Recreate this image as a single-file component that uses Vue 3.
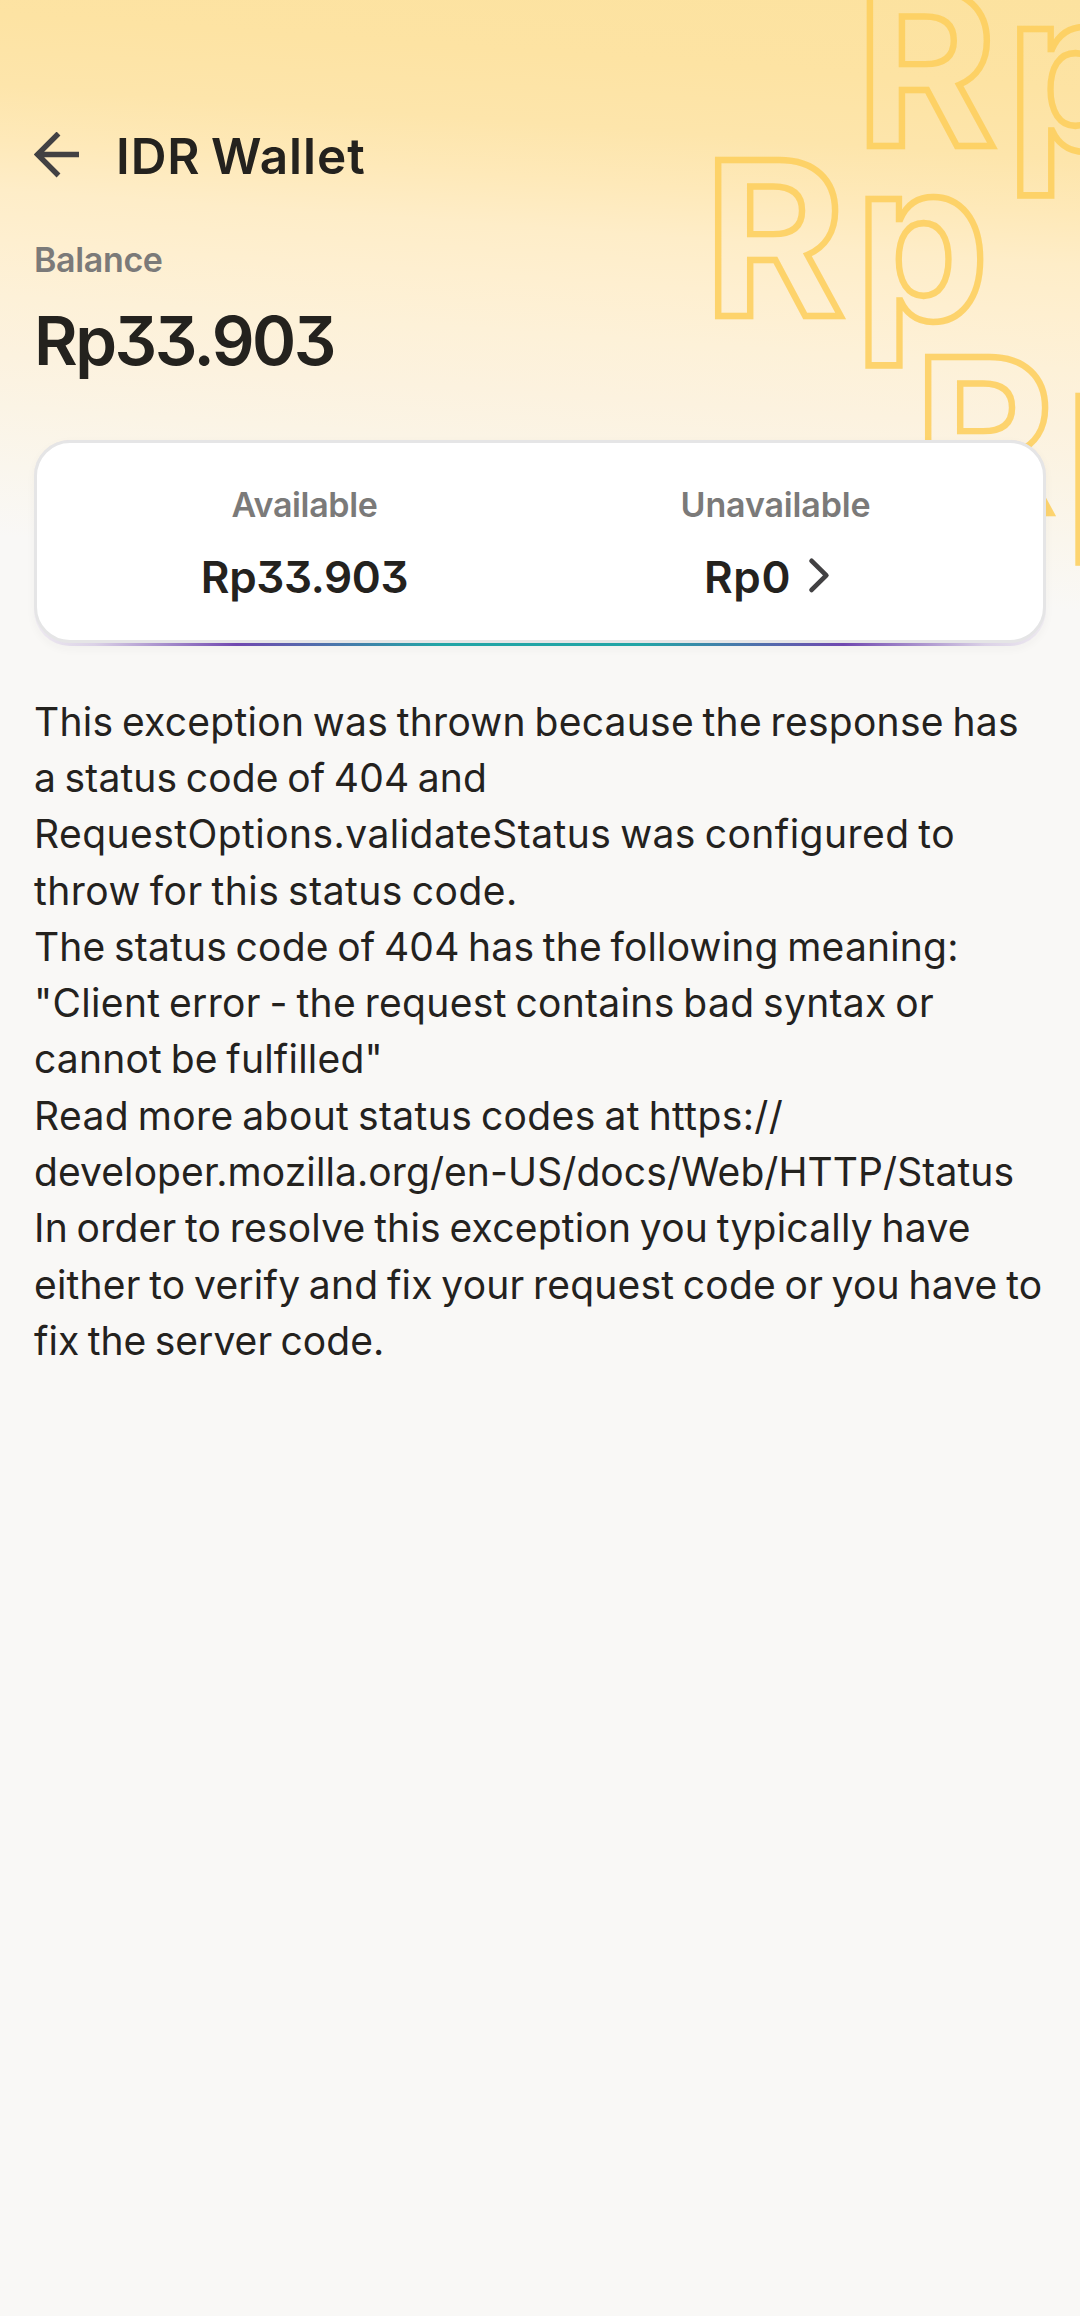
<script setup>
const message = [
  { text: 'This exception was thrown because the response has', tracking: -0.1 },
  { text: 'a status code of 404 and', tracking: -0.418 },
  { text: 'RequestOptions.validateStatus was configured to', tracking: 0.285 },
  { text: 'throw for this status code.', tracking: 0.09 },
  { text: 'The status code of 404 has the following meaning:', tracking: -0.245 },
  { text: '"Client error - the request contains bad syntax or', tracking: -0.1 },
  { text: 'cannot be fulfilled"', tracking: -0.062 },
  { text: 'Read more about status codes at https://', tracking: -0.015 },
  { text: 'developer.mozilla.org/en-US/docs/Web/HTTP/Status', tracking: 0.09 },
  { text: 'In order to resolve this exception you typically have', tracking: -0.18 },
  { text: 'either to verify and fix your request code or you have to', tracking: -0.3 },
  { text: 'fix the server code.', tracking: -0.38 },
]

// Word gaps are tightened; the saved width goes back between the letters.
const wordTrim = 2.6
const lineStyle = ({ text, tracking }) => {
  const spaces = text.split(' ').length - 1
  const spacing = tracking + (wordTrim * spaces) / (text.length - 1)
  return { letterSpacing: spacing.toFixed(3) + 'px' }
}

const marks = [
  { x: 855.7, y: 146 },
  { x: 704, y: 315.7 },
  { x: 914, y: 513.2 },
]
</script>

<template>
  <main class="page">
    <svg class="pattern" viewBox="0 0 1080 640" aria-hidden="true">
      <g v-for="m in marks" :key="m.y">
        <text :transform="`translate(${m.x} ${m.y})`">R</text>
        <text :transform="`translate(${m.x + 151.3} ${m.y + 4.2}) scale(0.985 1.035)`">p</text>
      </g>
    </svg>

    <header class="bar">
      <svg class="back" viewBox="0 0 46 46" aria-label="Back">
        <path d="M45 22.5H4M24.5 1.5L3.5 22.5L24.5 43.5" />
      </svg>
      <h1>IDR Wallet</h1>
    </header>

    <section class="balance">
      <p class="label">Balance</p>
      <p class="amount">Rp33.903</p>
    </section>

    <section class="card-edge">
      <div class="card">
        <div class="cell">
          <p class="label">Available</p>
          <p class="value">Rp33.903</p>
        </div>
        <div class="cell">
          <p class="label wide">Unavailable</p>
          <p class="value zero">
            <span>Rp0</span>
            <svg class="chevron" viewBox="0 0 50 50" aria-hidden="true">
              <path d="M14.6 8.9L29.3 23.4L14.6 37.9" />
            </svg>
          </p>
        </div>
      </div>
    </section>

    <section class="message">
      <span
        v-for="line in message"
        :key="line.text"
        class="line"
        :style="lineStyle(line)"
      >{{ line.text }}</span>
    </section>
  </main>
</template>

<style scoped>
.page {
  position: relative;
  box-sizing: border-box;
  width: 1080px;
  min-height: 2316px;
  padding: 126px 34px 0;
  overflow: hidden;
  font-family: Inter, 'Liberation Sans', sans-serif;
  font-feature-settings: 'cv09';
  color: #24221e;
  background:
    linear-gradient(184deg,
      #fce29f 0, #fde3a3 90px, #fde5ab 160px, #fee9b9 215px, #feedc8 265px,
      #feefd0 315px, #fdf1d8 370px, #fcf2df 430px, #fbf4e5 480px,
      #faf6ed 540px, #f9f8f6 610px) 0 0 / 1080px 640px no-repeat,
    #f9f8f6;
}

.pattern {
  position: absolute;
  top: 0;
  left: 0;
  width: 1080px;
  height: 640px;
  fill: none;
  stroke: #fdce5b;
  stroke-width: 6.4px;
  stroke-opacity: 0.86;
  font-weight: 700;
  font-size: 215px;
}

.bar,
.balance,
.card-edge,
.message {
  position: relative;
}

h1,
p {
  margin: 0;
  font-weight: inherit;
}

.bar {
  display: flex;
  align-items: center;
  gap: 36px;
  height: 60px;
}

.back {
  width: 46px;
  height: 46px;
  margin-top: -2px;
  fill: none;
  stroke: #424143;
  stroke-width: 5.4px;
}

h1 {
  font-weight: 600;
  font-size: 49.5px;
  line-height: 60px;
  letter-spacing: 0.95px;
  word-spacing: -3px;
}

.balance {
  display: flex;
  flex-direction: column;
  gap: 14px;
  margin-top: 51px;
}

.label {
  font-weight: 600;
  font-size: 34px;
  line-height: 46px;
  letter-spacing: -0.35px;
  color: #7b7a79;
}

.wide {
  letter-spacing: -0.15px;
}

.amount {
  font-weight: 600;
  font-size: 67px;
  line-height: 88px;
  letter-spacing: -2.5px;
}

.card-edge {
  height: 206px;
  margin-top: 55px;
  border-radius: 36px;
  background: linear-gradient(90deg,
    rgba(112, 72, 176, 0.08) 0%, rgba(112, 72, 176, 0.22) 6%, #7048b0 20%,
    #22a5a6 40%, #22a5a6 60%, #7048b0 80%, rgba(112, 72, 176, 0.22) 94%,
    rgba(112, 72, 176, 0.08) 100%);
  box-shadow: 0 3px 10px rgba(60, 50, 40, 0.04);
}

.card {
  box-sizing: border-box;
  display: flex;
  height: 203px;
  padding: 39px 32px 0;
  border: 3px solid #e5e5e6;
  border-radius: 36px;
  background: #fff;
}

.cell {
  display: flex;
  flex: 1;
  flex-direction: column;
  align-items: center;
  gap: 19px;
}

.value {
  display: flex;
  align-items: center;
  font-weight: 600;
  font-size: 44px;
  line-height: 60px;
  letter-spacing: -0.35px;
}

.zero {
  gap: 6px;
  letter-spacing: 0.67px;
}

.chevron {
  width: 50px;
  height: 50px;
  fill: none;
  stroke: #424143;
  stroke-width: 4.8px;
  stroke-linecap: round;
  stroke-linejoin: round;
}

.message {
  margin-top: 47.9px;
  font-size: 39px;
  line-height: 56.27px;
  word-spacing: -2.6px;
}

.line {
  display: block;
  white-space: nowrap;
}
</style>

<style>
body {
  margin: 0;
  background: #f9f8f6;
}
</style>
